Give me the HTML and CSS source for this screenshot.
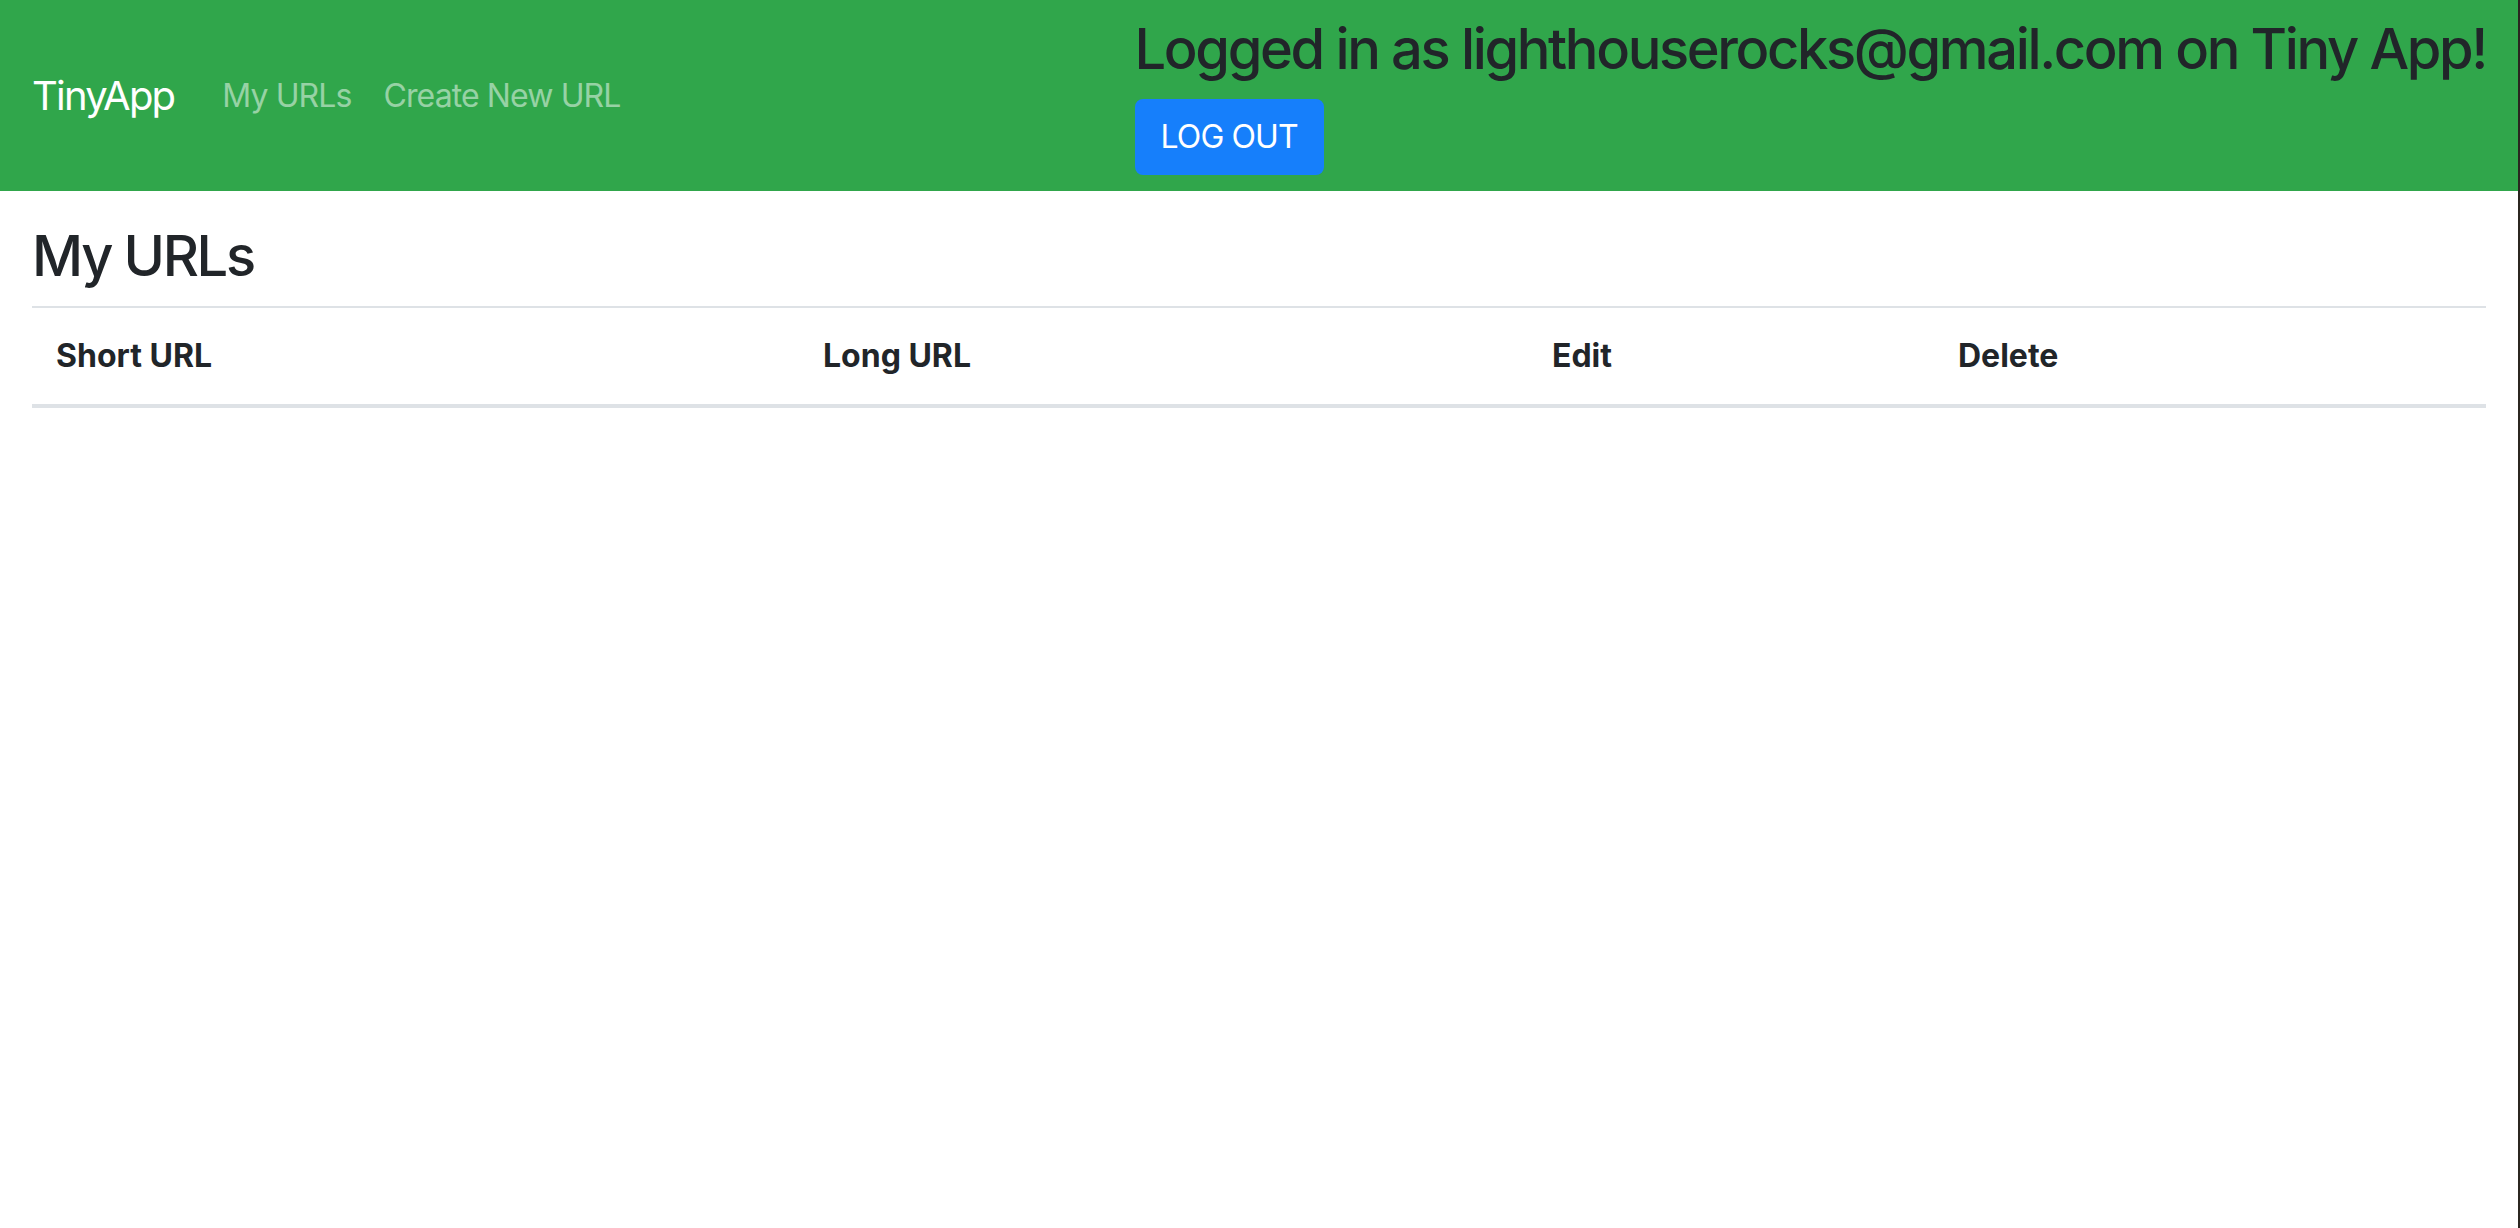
FILE: index.html
```html
<!DOCTYPE html>
<html lang="en">
<head>
<meta charset="utf-8">
<title>TinyApp</title>
<link rel="stylesheet" href="styles.css">
</head>
<body>
<div class="frame">
  <nav class="navbar">
    <a class="brand" href="#">TinyApp</a>
    <ul class="nav">
      <li><a class="nav-link" href="#">My URLs</a></li>
      <li><a class="nav-link" href="#">Create New URL</a></li>
    </ul>
    <div class="user">
      <h3 class="user-title">Logged in as lighthouserocks@gmail.com on Tiny App!</h3>
      <button class="btn" type="button">LOG OUT</button>
    </div>
  </nav>
  <main class="content">
    <h3 class="page-title">My URLs</h3>
    <table class="table">
      <colgroup>
        <col class="c1"><col class="c2"><col class="c3"><col class="c4">
      </colgroup>
      <thead>
        <tr>
          <th>Short URL</th>
          <th>Long URL</th>
          <th>Edit</th>
          <th>Delete</th>
        </tr>
      </thead>
      <tbody></tbody>
    </table>
  </main>
</div>
</body>
</html>
```
FILE: styles.css
```css
html, body {
  margin: 0;
  padding: 0;
  height: 100%;
}
body {
  background: #2b2620;
  font-family: Inter, "Noto Sans", sans-serif;
  font-size: 32px;
  line-height: 1.5;
  color: #212529;
}
.frame {
  background: #fff;
  width: calc(100% - 2px);
  min-height: 100%;
}
.navbar {
  display: flex;
  align-items: center;
  background: #30a64b;
  padding: 16px 32px;
}
.brand {
  font-size: 40px;
  line-height: 1.5;
  padding: 10px 0;
  margin-right: 32px;
  color: #fff;
  text-decoration: none;
  letter-spacing: -0.045em;
}
.nav {
  display: flex;
  list-style: none;
  margin: 0;
  padding: 0;
}
.nav-link {
  display: block;
  padding: 16px;
  color: rgba(255, 255, 255, 0.5);
  text-decoration: none;
  letter-spacing: -0.028em;
}
.user {
  margin-left: auto;
}
.user-title, .page-title {
  font-size: 56px;
  font-weight: 500;
  line-height: 1.2;
  margin: 0 0 16px;
  letter-spacing: -0.042em;
}
.btn {
  font-family: inherit;
  font-size: 32px;
  line-height: 1.5;
  color: #fff;
  background: #167ffb;
  border: 2px solid #167ffb;
  border-radius: 8px;
  padding: 12px 24px;
  letter-spacing: -0.028em;
}
.content {
  padding: 32px;
}
.table {
  width: 100%;
  border-collapse: collapse;
}
.c1 { width: 767px; }
.c2 { width: 729px; }
.c3 { width: 406px; }
.c4 { width: 552px; }
.table th {
  text-align: left;
  font-weight: 700;
  padding: 24px;
  border-top: 2px solid #dee2e6;
  border-bottom: 4px solid #dee2e6;
}
```
